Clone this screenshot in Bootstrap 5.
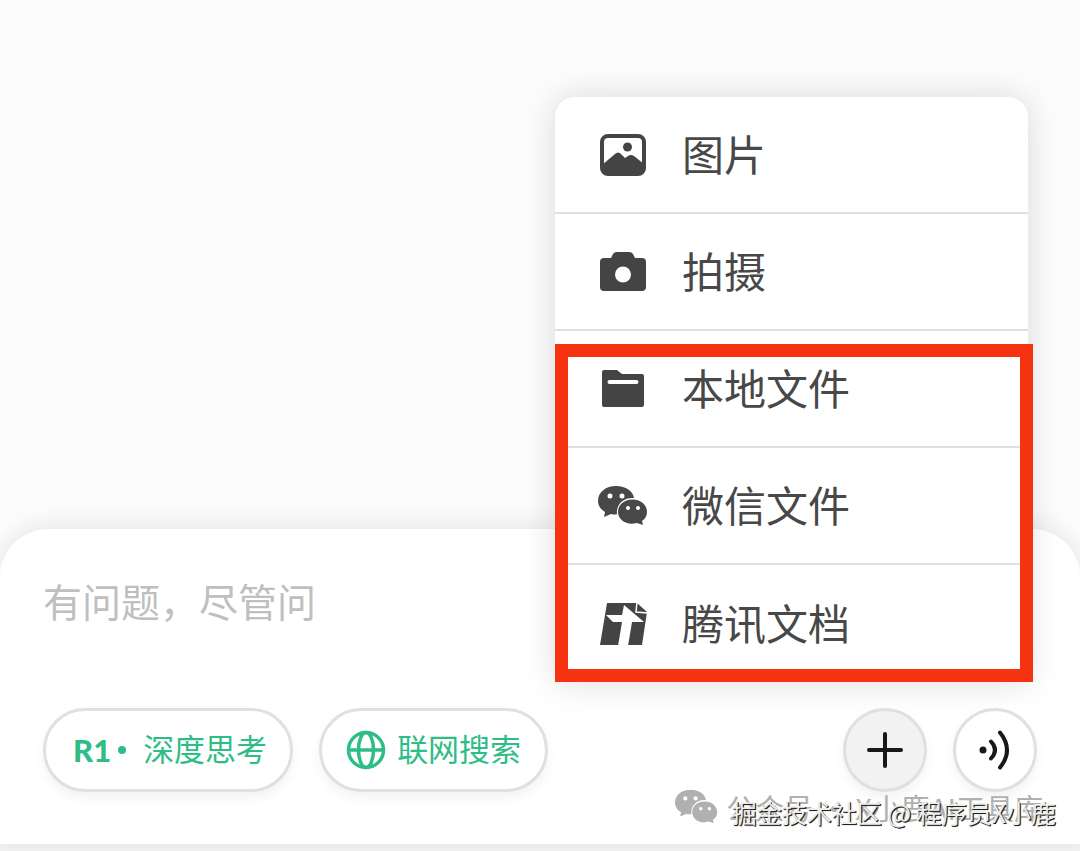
<!DOCTYPE html>
<html lang="zh-CN">
<head>
<meta charset="utf-8">
<meta name="viewport" content="width=device-width, initial-scale=1">
<title>有问题，尽管问</title>
<link href="https://cdn.jsdelivr.net/npm/bootstrap@5.3.0/dist/css/bootstrap.min.css" rel="stylesheet">
<style>
  body { font-family: "Noto Sans CJK SC", sans-serif; background: #fcfcfc; color: #444; }
  .composer { background: #fff; border-radius: 48px 48px 0 0; padding: 42px 43px 52px; box-shadow: 0 -4px 26px rgba(0,0,0,.09); }
  .page-foot { height: 7px; background: #f2f2f2; }
  .ask-input { height: 137px; font-size: 39px; line-height: 58px; resize: none; }
  .ask-input::placeholder { color: #bfbfbf; opacity: 1; }
  .tool-btn { height: 84px; border: 3px solid #e0e0e0; background: #fff; color: #2ebd85; font-size: 31px; line-height: 40px; box-shadow: 0 6px 12px rgba(0,0,0,.05); }
  .tool-btn:hover { background: #fafafa; color: #2ebd85; border-color: #e0e0e0; }
  .pill-think { padding: 0 23px 0 27px; }
  .pill-search { padding: 0 24px 0 22px; gap: 9px; }
  .r-one { font-family: Lato, sans-serif; font-weight: 900; font-size: 31px; }
  .pill-dot { width: 8px; height: 8px; background: #2ebd85; margin: 0 17px 0 7px; }
  .round-btn { width: 84px; color: #181818; }
  .round-btn:hover { color: #181818; }
  .round-btn.plus-btn { background: #f2f2f2; }
  .tool-row { gap: 26px; }
  .upload-menu { right: 52px; bottom: 162px; width: 473px; background: #fff; border-radius: 20px 20px 0 0; box-shadow: 0 0 34px rgba(0,0,0,.14); z-index: 2; }
  .menu-row { height: 117px; padding: 0 42px; gap: 33px; border: 0; border-bottom: 2px solid #dfdfdf; background: transparent; color: #484848; font-size: 42px; line-height: 60px; }
  .menu-row:last-of-type { border-bottom: 0; }
  .marked-area { left: 0; right: -5px; bottom: 0; height: 338px; border: 13px solid #f63310; pointer-events: none; }
  .stamp { white-space: nowrap; pointer-events: none; z-index: 1; }
  .stamp-account { right: 37px; bottom: 15px; font-size: 29px; line-height: 44px; color: #b0b0b0; gap: 8px; }
  .stamp-site { right: 24px; bottom: 12px; font-size: 25px; line-height: 40px; color: #eee; text-shadow: 1px 1px 0 #222, 1px 1px 1px #444; }
</style>
</head>
<body>
<svg class="d-none" aria-hidden="true">
  <symbol id="chat-bubbles" viewBox="0 0 50 40">
    <path fill="currentColor" fill-rule="evenodd" d="M18 0C28 0 35 5 36 12C26 11 18 18 19 28Q18 29 13 28L6 31L7 26C2 23 0 19 0 15C0 6 8 0 18 0ZM12 7.500a2.500 2.500 0 1 0 0 5a2.500 2.500 0 1 0 0-5ZM24 7.500a2.500 2.500 0 1 0 0 5a2.500 2.500 0 1 0 0-5Z"/>
    <path fill="currentColor" fill-rule="evenodd" d="M34.500 13.500C43 13.500 49 19 49 26C49 30 47 33 44 35L45 39L39 37C29 40 20 34 20 26C20 19 26 13.500 34.500 13.500ZM30 20a2 2 0 1 0 0 4a2 2 0 1 0 0-4ZM40 20a2 2 0 1 0 0 4a2 2 0 1 0 0-4Z"/>
  </symbol>
</svg>
<div class="min-vh-100 d-flex flex-column overflow-hidden">
  <main class="flex-grow-1"></main>
  <section class="composer position-relative">
    <form onsubmit="return false">
      <textarea aria-label="有问题，尽管问" class="ask-input d-block w-100 p-0 border-0 bg-transparent" placeholder="有问题，尽管问"></textarea>
      <div class="tool-row d-flex align-items-center">
        <button type="button" class="btn tool-btn pill-think rounded-pill d-flex align-items-center"><span class="r-one">R1</span><span class="pill-dot rounded-circle"></span><span class="mb-1">深度思考</span></button>
        <button type="button" class="btn tool-btn pill-search rounded-pill d-flex align-items-center">
          <svg width="44" height="44" viewBox="0 0 44 44" fill="none" stroke="currentColor" stroke-width="3.500" aria-hidden="true"><circle cx="22" cy="22" r="17.500"/><ellipse cx="22" cy="22" rx="7.500" ry="17.500"/><path d="M4 22H40"/></svg><span class="mb-1">联网搜索</span></button>
        <button type="button" class="btn tool-btn round-btn plus-btn rounded-circle p-0 ms-auto d-flex align-items-center justify-content-center" aria-label="添加">
          <svg width="36" height="36" viewBox="0 0 36 36" stroke="currentColor" stroke-width="4" stroke-linecap="round"><path d="M18 2V34M2 18H34"/></svg></button>
        <button type="button" class="btn tool-btn round-btn rounded-circle p-0 d-flex align-items-center justify-content-center" aria-label="语音">
          <svg width="40" height="40" viewBox="0 0 40 40" fill="none" stroke="currentColor" stroke-width="4" stroke-linecap="round"><circle cx="8" cy="20" r="3.500" fill="currentColor" stroke="none"/><path d="M16 11.500Q24 20 16 28.500M25 2.500Q39 20 25 37.500"/></svg></button>
      </div>
    </form>
    <div class="upload-menu position-absolute d-flex flex-column">
      <button type="button" class="menu-row d-flex align-items-center">
        <svg width="52" height="48" viewBox="0 0 52 48" aria-hidden="true"><rect x="5" y="5" width="42" height="38" rx="6" fill="none" stroke="#444" stroke-width="4"/><circle cx="30.500" cy="16" r="4.500" fill="#444"/><path fill="#444" d="M5 34L18 23Q21 20 24 23L28 27L31 25Q34 23 37 25L47 33V37Q47 43 41 43H11Q5 43 5 37Z"/></svg><span class="mb-1">图片</span></button>
      <button type="button" class="menu-row d-flex align-items-center">
        <svg width="52" height="48" viewBox="0 0 52 48" aria-hidden="true"><path fill="#444" fill-rule="evenodd" d="M7 10H14L16 6Q17 4 20 4H32Q35 4 36 6L38 10H45Q49 10 49 14V39Q49 43 45 43H7Q3 43 3 39V14Q3 10 7 10ZM26 18.500a8 8 0 1 0 0 16a8 8 0 1 0 0-16Z"/></svg><span class="mb-1">拍摄</span></button>
      <button type="button" class="menu-row d-flex align-items-center">
        <svg width="52" height="48" viewBox="0 0 52 48" aria-hidden="true"><path fill="#444" d="M7 5H20L25 9H45Q47 9 47 11V40Q47 42 45 42H7Q5 42 5 40V7Q5 5 7 5Z"/><path d="M12.500 17H39.500" stroke="#fff" stroke-width="4" stroke-linecap="round"/></svg><span class="mb-1">本地文件</span></button>
      <button type="button" class="menu-row d-flex align-items-center">
        <svg width="52" height="40" viewBox="-1 0 52 40" aria-hidden="true"><use href="#chat-bubbles" width="50" height="40"/></svg><span class="mb-1">微信文件</span></button>
      <button type="button" class="menu-row d-flex align-items-center">
        <svg width="52" height="48" viewBox="0 0 52 48" aria-hidden="true"><path fill="#444" d="M10 3H40L50 12L45 45H3Z"/><path d="M27 5L47 22H35L31 46H21L25 22H16L9 15H25Z" fill="#fff"/><path d="M40 2L39 12L51 13" fill="none" stroke="#fff" stroke-width="1.500"/></svg><span class="mb-1">腾讯文档</span></button>
      <div class="marked-area position-absolute"></div>
    </div>
    <div class="stamp stamp-account position-absolute d-flex align-items-center"><svg width="43" height="36" viewBox="0 0 50 40" aria-hidden="true"><use href="#chat-bubbles" width="50" height="40"/></svg><span>公众号 · X小鹿AI工具库</span></div>
    <div class="stamp stamp-site position-absolute">掘金技术社区 @ 程序员X小鹿</div>
  </section>
  <footer class="page-foot"></footer>
</div>
<script src="https://cdn.jsdelivr.net/npm/bootstrap@5.3.0/dist/js/bootstrap.bundle.min.js"></script>
</body>
</html>
